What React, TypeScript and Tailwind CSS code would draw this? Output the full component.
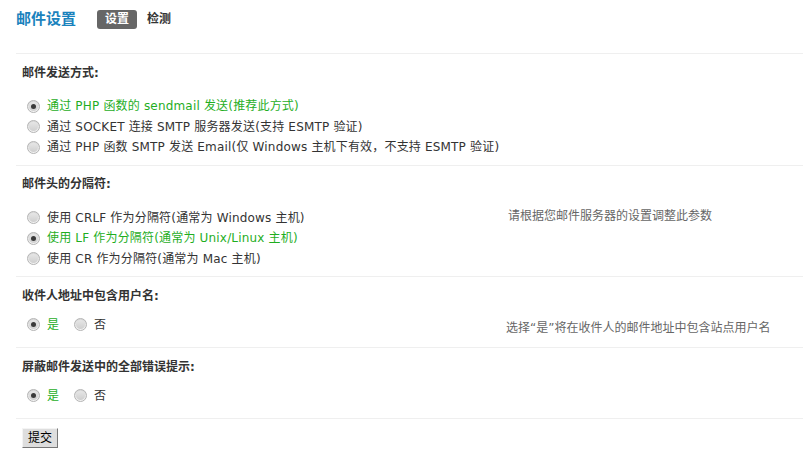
import React from "react";

const FONT = "font-['DejaVu_Sans','Noto_Sans_CJK_SC',sans-serif]";

function Radio({ checked }: { checked?: boolean }) {
  return (
    <span className="relative inline-flex items-center justify-center w-[13px] h-[13px] rounded-full border border-[#b4b4b4] bg-[linear-gradient(180deg,#d8d8d8,#f4f4f4)] shrink-0">
      <span className="w-[9px] h-[9px] rounded-full bg-[linear-gradient(180deg,#e6e6e6,#cfcfcf)] flex items-center justify-center">
        {checked && <span className="w-[5px] h-[5px] rounded-full bg-[#3a3a3a]" />}
      </span>
    </span>
  );
}

function Option({ label, checked }: { label: string; checked?: boolean }) {
  return (
    <div className="flex items-center h-[20.5px]">
      <Radio checked={checked} />
      <span className={"ml-[7px] tracking-[0.18px] " + (checked ? "text-[#1fae1f]" : "text-[#333]")}>{label}</span>
    </div>
  );
}

function Heading({ children }: { children: React.ReactNode }) {
  return (
    <div className="h-[38px] flex items-center pl-[6px] font-bold text-[#333] border-t border-[#efefef]">
      {children}
    </div>
  );
}

function YesNo() {
  return (
    <div className="flex items-center h-[21px]">
      <Radio checked />
      <span className="ml-[7px] text-[#1fae1f]">是</span>
      <span className="ml-[15px]">
        <Radio />
      </span>
      <span className="ml-[7px] text-[#333]">否</span>
    </div>
  );
}

export default function App() {
  return (
    <div className={"w-[803px] h-[473px] bg-white text-[12px] leading-[14px] text-[#333] " + FONT}>
      <div className="h-[53px] pt-[9px] pl-4">
        <div className="flex items-center h-[20px]">
          <span className="text-[15px] font-bold text-[#1a82bd] leading-[20px]">邮件设置</span>
          <span className="ml-[21px] h-[19px] px-[8px] rounded-[3px] bg-[#666] text-white font-bold flex items-center">设置</span>
          <span className="ml-[10px] font-bold text-[#333]">检测</span>
        </div>
      </div>
      <div className="ml-4">
        <Heading>邮件发送方式:</Heading>
        <div className="pl-[11px] pt-[5px] pb-[7px]">
          <Option checked label="通过 PHP 函数的 sendmail 发送(推荐此方式)" />
          <Option label="通过 SOCKET 连接 SMTP 服务器发送(支持 ESMTP 验证)" />
          <Option label="通过 PHP 函数 SMTP 发送 Email(仅 Windows 主机下有效，不支持 ESMTP 验证)" />
        </div>
        <Heading>邮件头的分隔符:</Heading>
        <div className="flex pt-[5px] pb-[7px]">
          <div className="w-[492px] pl-[11px]">
            <Option label="使用 CRLF 作为分隔符(通常为 Windows 主机)" />
            <Option checked label="使用 LF 作为分隔符(通常为 Unix/Linux 主机)" />
            <Option label="使用 CR 作为分隔符(通常为 Mac 主机)" />
          </div>
          <div className="pt-[1px] text-[#666]">请根据您邮件服务器的设置调整此参数</div>
        </div>
        <Heading>收件人地址中包含用户名:</Heading>
        <div className="flex pb-[12px]">
          <div className="w-[490px] pl-[11px]">
            <YesNo />
          </div>
          <div className="pt-[7px] text-[#666]">选择“是”将在收件人的邮件地址中包含站点用户名</div>
        </div>
        <Heading>屏蔽邮件发送中的全部错误提示:</Heading>
        <div className="pl-[11px] pb-[12px]">
          <YesNo />
        </div>
        <div className="border-t border-[#efefef] pt-[9px] pl-[6px]">
          <button className="w-[36px] h-[20px] bg-[#dedede] border border-t-[#f4f4f4] border-l-[#f4f4f4] border-r-[#777] border-b-[#777] text-black text-[12px] leading-[16px] flex items-center justify-center">
            提交
          </button>
        </div>
      </div>
    </div>
  );
}
